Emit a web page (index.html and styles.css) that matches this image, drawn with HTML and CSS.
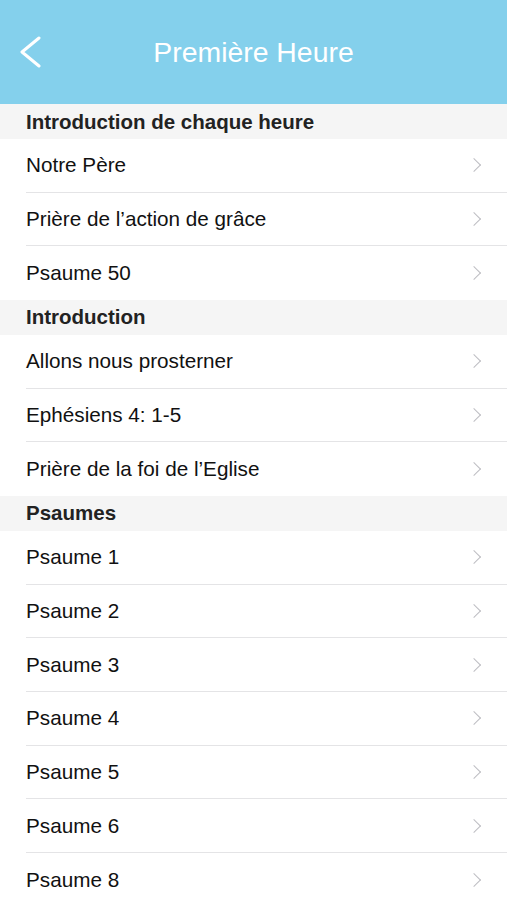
FILE: index.html
```html
<!DOCTYPE html>
<html lang="fr">
  <head>
    <meta charset="UTF-8" />
    <title>Première Heure</title>
    <meta name="viewport" content="width=device-width, initial-scale=1.0" />
    <link rel="stylesheet" href="styles.css">
  </head>
  <body>
    <header class="nav-bar">
      <a class="back" href="#">
        <svg viewBox="0 0 24 32">
          <path d="M21 2 L4 16 L21 30" />
        </svg>
      </a>
      <h1>Première Heure</h1>
    </header>

    <main class="list">
      <div class="section-title">Introduction de chaque heure</div>
      <ul>
        <li>Notre Père</li>
        <li>Prière de l’action de grâce</li>
        <li>Psaume 50</li>
      </ul>

      <div class="section-title">Introduction</div>
      <ul>
        <li>Allons nous prosterner</li>
        <li>Ephésiens 4: 1-5</li>
        <li>Prière de la foi de l’Eglise</li>
      </ul>

      <div class="section-title">Psaumes</div>
      <ul>
        <li>Psaume 1</li>
        <li>Psaume 2</li>
        <li>Psaume 3</li>
        <li>Psaume 4</li>
        <li>Psaume 5</li>
        <li>Psaume 6</li>
        <li>Psaume 8</li>
      </ul>
    </main>
  </body>
</html>
```

FILE: styles.css
```css
body {
  font-family: "Liberation Sans", Arial, sans-serif;
  background-color: #fff;
  margin: 0;
  padding: 0;
  overflow: hidden;
}

.nav-bar {
  height: 104px;
  background-color: #84d0ec;
  display: flex;
  align-items: center;
  justify-content: center;
  position: relative;
}

.nav-bar h1 {
  margin: 0;
  color: #fff;
  font-size: 28.4px;
  font-weight: normal;
}

.back {
  position: absolute;
  left: 18px;
  top: 36px;
  width: 24px;
  height: 32px;
}

.back svg {
  width: 24px;
  height: 32px;
  fill: none;
  stroke: #fff;
  stroke-width: 3;
  stroke-linecap: round;
  stroke-linejoin: round;
}

.section-title {
  height: 35px;
  background-color: #f5f5f5;
  padding-left: 26px;
  display: flex;
  align-items: center;
  font-size: 20.5px;
  font-weight: bold;
  color: #222;
}

ul {
  list-style: none;
  margin: 0;
  padding: 0;
}

li {
  height: 53.67px;
  box-sizing: border-box;
  margin-left: 26px;
  padding-right: 26px;
  display: flex;
  align-items: center;
  justify-content: space-between;
  font-size: 20.7px;
  color: #111;
  border-bottom: 1px solid #e4e4e6;
}

li:last-child {
  border-bottom: none;
}

li::after {
  content: "";
  width: 9px;
  height: 9px;
  border-top: 1.5px solid #bdbdc2;
  border-right: 1.5px solid #bdbdc2;
  transform: rotate(45deg);
  margin-right: 2px;
}
```
